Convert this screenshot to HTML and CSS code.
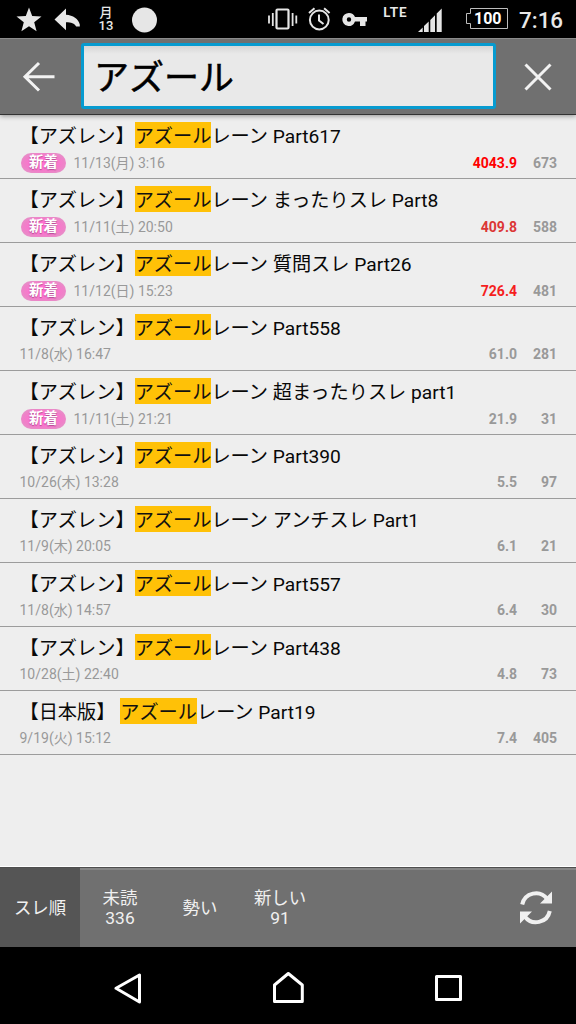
FILE: index.html
```html
<!DOCTYPE html>
<html lang="ja">
<head>
<meta charset="utf-8">
<title>アズール</title>
<link rel="stylesheet" href="styles.css">
</head>
<body>
<div class="screen">
  <div class="status">
    <svg class="status-icons" width="250" height="38" viewBox="0 0 250 38" fill="#e6e6e6">
      <path d="M29 7.500l3.200 8.600 9.300.5-7.300 5.600 2.400 9-7.600-5-7.600 5 2.400-9-7.300-5.600 9.300-.5z"/>
      <path d="M54.500 19.500L66 8.500v6.300c7 .5 12.500 4 13.800 9.800v2h-3.600c-1.700-3.400-5-4.300-10.200-4.300v8z"/>
      <circle cx="144.500" cy="20" r="12.500"/>
    </svg>
    <div class="calendar"><span>月</span><span>13</span></div>
    <div class="status-right">
      <svg width="186" height="38" viewBox="264 0 186 38" fill="none" stroke="#e6e6e6" stroke-width="2">
        <rect x="276.500" y="9.500" width="12" height="19" rx="1" stroke-width="2.200"/>
        <path d="M272.800 13v13M269 15.500v8M292.600 13v13M296.300 15.500v8" stroke-width="1.800"/>
        <circle cx="319.300" cy="20" r="9.400"/>
        <path d="M309 13l5.500-4.700M329.600 13l-5.500-4.700M319 14.500v6l4.500 3.500"/>
        <path fill="#e6e6e6" stroke="none" fill-rule="evenodd" d="M349 13a6.500 6.500 0 0 1 6 4h12v4.500h-1.500V26H360v-4.500h-5A6.500 6.500 0 1 1 349 13zm0 4.300a2.200 2.200 0 1 0 0 4.400a2.200 2.200 0 0 0 0-4.400z"/>
        <path fill="#e6e6e6" stroke="none" d="M418 32l4.700-4.600V32zM424 26l4.700-4.600V32H424zM430.300 20l4.700-4.700V32h-4.700zM436.700 13.500l5-5V32h-5z"/>
      </svg>
      <span class="lte">LTE</span>
      <svg class="battery" width="44" height="24" viewBox="0 0 44 24" fill="none" stroke="#bdbdbd">
        <path d="M5.500 1.500h37v20h-37v-5h-4v-10h4z"/>
      </svg>
      <span class="percent">100</span>
      <span class="clock">7:16</span>
    </div>
  </div>

  <header class="toolbar">
    <svg class="back" width="80" height="76" viewBox="0 0 80 76" fill="none" stroke="#f2f2f2" stroke-width="3">
      <path d="M54.500 37.800H25M39 24L25 37.800 39 51.500"/>
    </svg>
    <div class="search">アズール</div>
    <svg class="close" width="80" height="76" viewBox="0 0 80 76" fill="none" stroke="#f2f2f2" stroke-width="3">
      <path d="M29.500 25.500l25 25M54.500 25.500l-25 25"/>
    </svg>
  </header>

  <main class="list">
    <article class="row"><h2>【アズレン】<mark>アズール</mark>レーン Part617</h2><div class="meta unread"><b class="badge">新着</b><time>11/13(月) 3:16</time><span class="speed hot3">4043.9</span><span class="count">673</span></div></article>
    <article class="row"><h2>【アズレン】<mark>アズール</mark>レーン まったりスレ Part8</h2><div class="meta unread"><b class="badge">新着</b><time>11/11(土) 20:50</time><span class="speed hot1">409.8</span><span class="count">588</span></div></article>
    <article class="row"><h2>【アズレン】<mark>アズール</mark>レーン 質問スレ Part26</h2><div class="meta unread"><b class="badge">新着</b><time>11/12(日) 15:23</time><span class="speed hot2">726.4</span><span class="count">481</span></div></article>
    <article class="row"><h2>【アズレン】<mark>アズール</mark>レーン Part558</h2><div class="meta"><time>11/8(水) 16:47</time><span class="speed">61.0</span><span class="count">281</span></div></article>
    <article class="row"><h2>【アズレン】<mark>アズール</mark>レーン 超まったりスレ part1</h2><div class="meta unread"><b class="badge">新着</b><time>11/11(土) 21:21</time><span class="speed">21.9</span><span class="count">31</span></div></article>
    <article class="row"><h2>【アズレン】<mark>アズール</mark>レーン Part390</h2><div class="meta"><time>10/26(木) 13:28</time><span class="speed">5.5</span><span class="count">97</span></div></article>
    <article class="row"><h2>【アズレン】<mark>アズール</mark>レーン アンチスレ Part1</h2><div class="meta"><time>11/9(木) 20:05</time><span class="speed">6.1</span><span class="count">21</span></div></article>
    <article class="row"><h2>【アズレン】<mark>アズール</mark>レーン Part557</h2><div class="meta"><time>11/8(水) 14:57</time><span class="speed">6.4</span><span class="count">30</span></div></article>
    <article class="row"><h2>【アズレン】<mark>アズール</mark>レーン Part438</h2><div class="meta"><time>10/28(土) 22:40</time><span class="speed">4.8</span><span class="count">73</span></div></article>
    <article class="row"><h2>【日本版】 <mark>アズール</mark>レーン Part19</h2><div class="meta"><time>9/19(火) 15:12</time><span class="speed">7.4</span><span class="count">405</span></div></article>
  </main>

  <footer class="tabs">
    <div class="tab active"><span>スレ順</span></div>
    <div class="tab"><span>未読</span><span>336</span></div>
    <div class="tab"><span>勢い</span></div>
    <div class="tab"><span>新しい</span><span>91</span></div>
    <svg class="refresh" width="80" height="80" viewBox="496 868 80 80">
      <g fill="none" stroke="#f0f0f0" stroke-width="4">
        <path d="M522.200 904.500a14 14 0 0 1 25-5.500M549.800 911a14 14 0 0 1-25 5.500"/>
      </g>
      <path fill="#f0f0f0" d="M552 891.500V903.500h-12zM520 923.500v-12h12z"/>
    </svg>
  </footer>

  <nav class="navbar">
    <svg width="576" height="77" viewBox="0 947 576 77" fill="none" stroke="#fff" stroke-width="3" stroke-linejoin="round">
      <path d="M139.500 975v27L116 988.300zM274.500 1001.500v-16.500l13.800-11.500 14 11.500v16.500z"/>
      <path d="M436.500 976.500h24v23h-24z"/>
    </svg>
  </nav>
</div>
</body>
</html>
```
FILE: styles.css
```css
* { box-sizing: border-box; }
body {
  margin: 0;
  background: #000;
  font-family: Roboto, "Noto Sans CJK JP", sans-serif;
  text-spacing-trim: space-all;
}
svg { display: block; flex: none; }
.screen {
  width: 576px;
  height: 1024px;
  display: flex;
  flex-direction: column;
  overflow: hidden;
}

.status { position: relative; height: 38px; flex: none; display: flex; justify-content: space-between; color: #e8e8e8; }
.calendar {
  position: absolute;
  left: 96px;
  top: 6px;
  width: 20px;
  display: flex;
  flex-direction: column;
  align-items: center;
  font-size: 13px;
  line-height: 13px;
  font-weight: 500;
}
.status-right { position: relative; width: 312px; }
.lte { position: absolute; left: 119px; top: 4px; font: 700 14px/16px Lato, sans-serif; letter-spacing: .7px; }
.battery { position: absolute; left: 201px; top: 7px; }
.percent { position: absolute; left: 210px; top: 8px; font-size: 16px; line-height: 21px; font-weight: 700; color: #fff; }
.clock { position: absolute; left: 255px; top: 6px; font-size: 22.4px; line-height: 28px; font-weight: 500; }

.toolbar {
  height: 77px;
  flex: none;
  display: flex;
  align-items: flex-start;
  position: relative;
  z-index: 1;
  background: #707070;
  border-top: 1px solid #8b8b8b;
  border-bottom: 1px solid #333;
  box-shadow: 0 1px 5px rgba(0, 0, 0, .4);
}
.back { margin-right: 1px; }
.search {
  width: 415px;
  height: 66px;
  margin-top: 4px;
  padding-left: 10px;
  border: 3px solid #079bd0;
  border-radius: 3px;
  background: linear-gradient(#d6d6d6, #e9e9e9 8px);
  font-size: 35px;
  line-height: 66px;
  color: #000;
  -webkit-text-stroke: .5px #000;
}

.list { flex: 1; background: #eee; border-bottom: 1px solid #fff; }
.row { height: 64px; padding: 7px 19px 0 19.5px; border-bottom: 1px solid #9c9c9c; }
.row h2 { margin: 0; height: 26px; font-size: 19.2px; line-height: 29px; font-weight: 400; color: #080808; white-space: nowrap; }
.row mark { display: inline-block; height: 26px; background: #ffc107; color: #111; vertical-align: top; }
.meta { display: flex; align-items: center; height: 20px; margin-top: 4px; font-size: 14px; line-height: 20px; color: #999; }
.meta.unread { margin-top: 5px; }
.badge {
  width: 45px;
  height: 20px;
  margin: 0 7.5px 0 1.5px;
  border-radius: 10px;
  background: radial-gradient(ellipse, #ff70d0 35%, #ee82c8 65%, #dda0c8);
  color: #fff;
  font-size: 14.4px;
  line-height: 19px;
  text-align: center;
  text-shadow: 0 1px 1px #b04890;
}
.speed, .count { font-weight: 700; text-align: right; }
.speed { margin-left: auto; }
.count { width: 40px; }
.hot1 { color: #dc3636; }
.hot2 { color: #f51e1e; }
.hot3 { color: #f00; }

.tabs { height: 80px; flex: none; display: flex; background: #707070; border-top: 1px solid #4e4e4e; box-shadow: inset 0 2px #868686; }
.tab { width: 80px; display: flex; flex-direction: column; align-items: center; justify-content: center; color: #f0f0f0; font-size: 17.4px; line-height: 20px; }
.tab.active { background: #555; }
.refresh { margin-left: auto; }
.navbar { height: 77px; flex: none; }
```
